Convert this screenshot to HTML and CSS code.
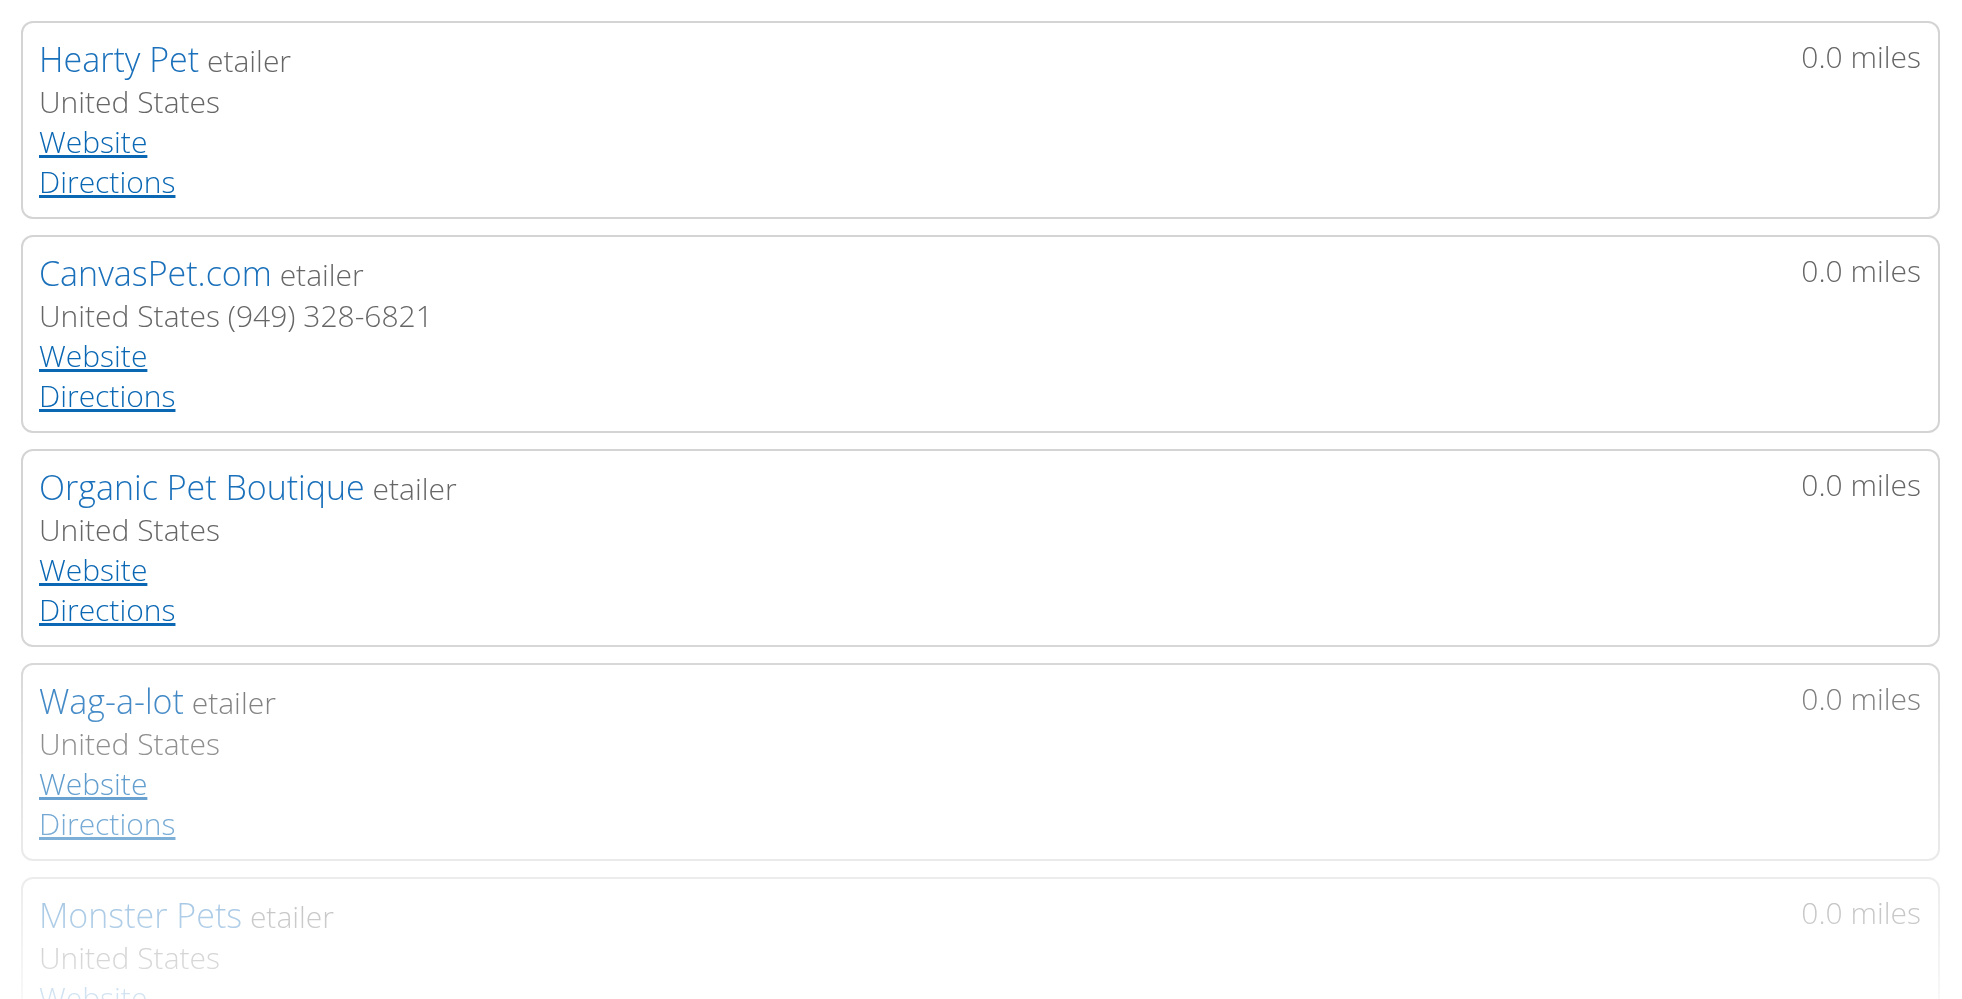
FILE: index.html
```html
<!DOCTYPE html>
<html lang="en">

<head>
    <meta charset="UTF-8">
    <title>Store Locator</title>
    <link rel="stylesheet" href="styles.css">
</head>

<body>
    <div class="store-list">
        <div class="store-item">
            <div class="store-item-info">
                <div class="store-item-title">
                    <span class="store-item-name">Hearty Pet</span>
                    <span class="store-item-type">etailer</span>
                </div>
                <div class="store-item-address">United States</div>
                <a class="store-item-link" href="#">Website</a>
                <a class="store-item-link" href="#">Directions</a>
            </div>
            <div class="store-item-distance">0.0 miles</div>
        </div>
        <div class="store-item">
            <div class="store-item-info">
                <div class="store-item-title">
                    <span class="store-item-name">CanvasPet.com</span>
                    <span class="store-item-type">etailer</span>
                </div>
                <div class="store-item-address">United States (949) 328-6821</div>
                <a class="store-item-link" href="#">Website</a>
                <a class="store-item-link" href="#">Directions</a>
            </div>
            <div class="store-item-distance">0.0 miles</div>
        </div>
        <div class="store-item">
            <div class="store-item-info">
                <div class="store-item-title">
                    <span class="store-item-name">Organic Pet Boutique</span>
                    <span class="store-item-type">etailer</span>
                </div>
                <div class="store-item-address">United States</div>
                <a class="store-item-link" href="#">Website</a>
                <a class="store-item-link" href="#">Directions</a>
            </div>
            <div class="store-item-distance">0.0 miles</div>
        </div>
        <div class="store-item">
            <div class="store-item-info">
                <div class="store-item-title">
                    <span class="store-item-name">Wag-a-lot</span>
                    <span class="store-item-type">etailer</span>
                </div>
                <div class="store-item-address">United States</div>
                <a class="store-item-link" href="#">Website</a>
                <a class="store-item-link" href="#">Directions</a>
            </div>
            <div class="store-item-distance">0.0 miles</div>
        </div>
        <div class="store-item">
            <div class="store-item-info">
                <div class="store-item-title">
                    <span class="store-item-name">Monster Pets</span>
                    <span class="store-item-type">etailer</span>
                </div>
                <div class="store-item-address">United States</div>
                <a class="store-item-link" href="#">Website</a>
                <a class="store-item-link" href="#">Directions</a>
            </div>
            <div class="store-item-distance">0.0 miles</div>
        </div>
    </div>
</body>

</html>
```

FILE: styles.css
```css
body {
    background: #FFFFFF;
    margin: 0;
    font-family: "Open Sans", "Liberation Sans", sans-serif;
    font-weight: 300;
}

.store-list {
    display: flex;
    flex-direction: column;
    gap: 16px;
    padding: 21px 22px 21px 21px;
    -webkit-mask-image: linear-gradient(to bottom, #000 620px, transparent 1080px);
    mask-image: linear-gradient(to bottom, #000 620px, transparent 1080px);
}

.store-item {
    display: flex;
    justify-content: space-between;
    align-items: flex-start;
    border: 2px solid #D4D4D4;
    border-radius: 12px;
    padding: 16px 17px 15px 16px;
}

.store-item-info {
    display: flex;
    flex-direction: column;
    align-items: flex-start;
    font-size: 30px;
    line-height: 40px;
}

.store-item-title {
    margin-bottom: 1px;
}

.store-item-name {
    font-size: 34px;
    color: #1A70BA;
}

.store-item-type {
    color: #666666;
}

.store-item-address {
    color: #666666;
}

.store-item-link {
    color: #0A67B3;
    text-decoration: underline;
}

.store-item-distance {
    font-size: 30px;
    line-height: 35px;
    color: #666666;
}
```
